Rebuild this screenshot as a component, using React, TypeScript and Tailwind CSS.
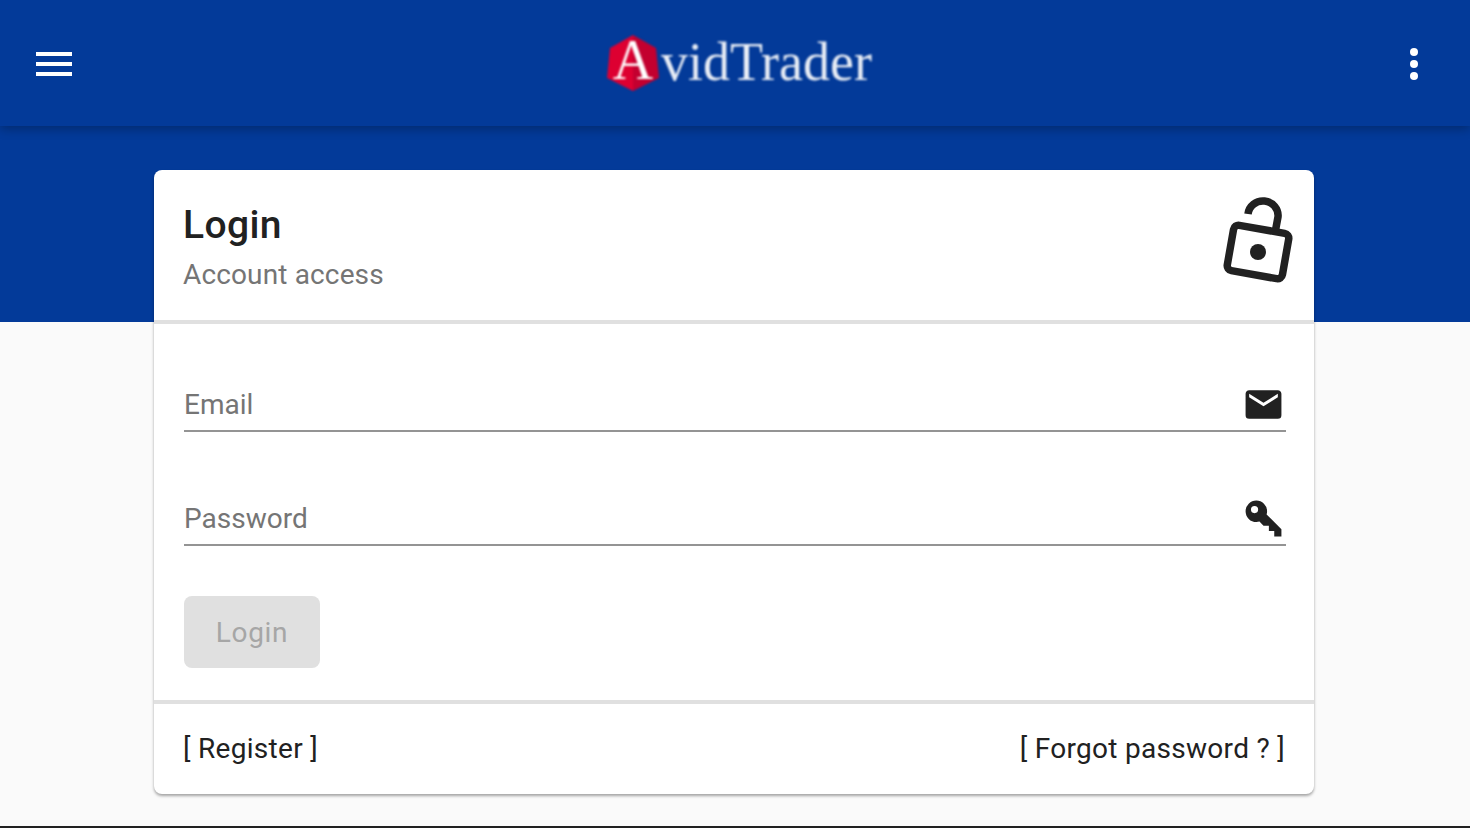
const BLUE = "bg-[#033a99]"

function MenuBars() {
  return (
    <button className="flex w-9 flex-col gap-1.5">
      <span className="h-1 w-9 bg-white" />
      <span className="h-1 w-9 bg-white" />
      <span className="h-1 w-9 bg-white" />
    </button>
  )
}

function Logo() {
  return (
    <div className="mr-[3px] -mt-[2px] flex h-14 items-center blur-[0.8px]">
      <div className="relative h-14 w-[52px]">
        <svg viewBox="0 0 52 56" className="absolute inset-0 h-14 w-[52px]">
          <path d="M26 0L3 13 0 43 26 56z" fill="#dd0031" />
          <path d="M26 0L49 13 52 43 26 56z" fill="#c3002f" />
        </svg>
        <span className="absolute inset-0 -mt-[3px] text-center font-['Liberation_Serif',serif] text-[56px] leading-[56px] text-white">
          A
        </span>
      </div>
      <span className="-mt-[3px] ml-[2px] font-['Liberation_Serif',serif] text-[54px] leading-[56px] text-[#e8edf5]">
        vidTrader
      </span>
    </div>
  )
}

function DotsIcon() {
  return (
    <svg viewBox="0 0 8 32" className="h-8 w-2 fill-white">
      <circle cx="4" cy="4" r="4" />
      <circle cx="4" cy="16" r="4" />
      <circle cx="4" cy="28" r="4" />
    </svg>
  )
}

function OpenLock() {
  return (
    <svg viewBox="0 0 85 100" className="h-[100px] w-[85px] fill-none stroke-[#212121]">
      <path d="M33 24A15 14.500 0 0 1 63 27L60 43" strokeWidth="7.500" />
      <rect x="15" y="39" width="56" height="46" rx="5" strokeWidth="7.500" transform="rotate(10 43 62)" />
      <circle cx="43" cy="62" r="8" className="fill-[#212121] stroke-none" />
    </svg>
  )
}

function MailIcon() {
  return (
    <svg viewBox="0 0 24 24" className="h-[43px] w-[43px] fill-[#212121]">
      <path d="M20,8L12,13L4,8V6L12,11L20,6M20,4H4C2.89,4 2,4.89 2,6V18A2,2 0 0,0 4,20H20A2,2 0 0,0 22,18V6C22,4.89 21.1,4 20,4Z" />
    </svg>
  )
}

function KeyIcon() {
  return (
    <svg viewBox="0 0 24 24" className="h-[43px] w-[43px] fill-[#212121]">
      <path d="M22,18V22H18V19H15V16H12L9.74,13.74C9.19,13.91 8.61,14 8,14A6,6 0 0,1 2,8A6,6 0 0,1 8,2A6,6 0 0,1 14,8C14,8.61 13.91,9.19 13.74,9.74L22,18M7,5A2,2 0 0,0 5,7A2,2 0 0,0 7,9A2,2 0 0,0 9,7A2,2 0 0,0 7,5Z" />
    </svg>
  )
}

function Field({ label, type, icon }: { label: string; type: string; icon: React.ReactNode }) {
  return (
    <div className="flex h-[50px] items-center border-b-2 border-[#949494] pb-[3px]">
      <input
        type={type}
        placeholder={label}
        className="min-w-0 flex-1 bg-transparent text-[28px] leading-[34px] text-[#212121] outline-none placeholder:text-[#757575]"
      />
      <div className="mr-[1px] flex w-[43px] items-center justify-center">{icon}</div>
    </div>
  )
}

export default function App() {
  return (
    <div className="flex h-[828px] flex-col overflow-hidden bg-[#fafafa] font-['Roboto',sans-serif]">
      <div className={`h-[322px] shrink-0 ${BLUE}`}>
        <header className={`relative flex h-[126px] items-center justify-between pl-9 pr-[52px] pt-[2px] shadow-[0_3px_10px_rgba(0,0,0,0.28)] ${BLUE}`}>
          <MenuBars />
          <Logo />
          <DotsIcon />
        </header>
      </div>

      <main className="relative ml-[154px] -mt-[152px] flex h-[624px] w-[1160px] shrink-0 flex-col rounded-lg bg-white shadow-[0_2px_3px_rgba(0,0,0,0.35)]">
        <section className="flex h-[154px] justify-between border-b-4 border-[#e0e0e0] pl-[29px] pr-[14px]">
          <div className="pt-[31px]">
            <h1 className="text-[39px] leading-[48px] font-medium tracking-[0.4px] text-[#212121]">Login</h1>
            <p className="mt-[1px] text-[28px] leading-[50px] tracking-[0.14px] text-[#757575]">Account access</p>
          </div>
          <div className="pt-[20px]">
            <OpenLock />
          </div>
        </section>

        <section className="flex h-[380px] flex-col border-b-4 border-[#e0e0e0] pl-[30px] pr-[28px] pt-[58px]">
          <Field label="Email" type="email" icon={<MailIcon />} />
          <div className="mt-[64px]">
            <Field label="Password" type="password" icon={<KeyIcon />} />
          </div>
          <button
            disabled
            className="mt-[50px] h-[72px] w-[136px] rounded-lg bg-[#e0e0e0] pt-[1px] text-[28px] font-normal tracking-[0.7px] text-[#a6a6a6]"
          >
            Login
          </button>
        </section>

        <footer className="flex h-[90px] items-center justify-between pl-[29px] pr-[29px] text-[28px] tracking-[0.3px] text-[#212121]">
          <a>[ Register ]</a>
          <a>[ Forgot password ? ]</a>
        </footer>
      </main>

      <div className="mt-auto h-[2px] bg-[#212121]" />
    </div>
  )
}
